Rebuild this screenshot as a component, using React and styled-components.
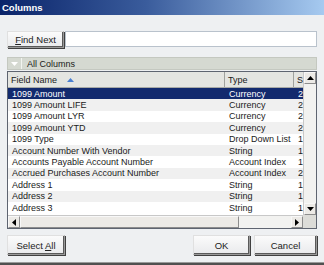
import React from 'react'
import styled, { createGlobalStyle } from 'styled-components';

const Global = createGlobalStyle`
html,body{margin:0;padding:0;overflow:hidden;background:#eef0f2;}
*{box-sizing:border-box;}
`;

const rows = [
  ['1099 Amount', 'Currency', '2'],
  ['1099 Amount LIFE', 'Currency', '2'],
  ['1099 Amount LYR', 'Currency', '2'],
  ['1099 Amount YTD', 'Currency', '2'],
  ['1099 Type', 'Drop Down List', '1'],
  ['Account Number With Vendor', 'String', '1'],
  ['Accounts Payable Account Number', 'Account Index', '1'],
  ['Accrued Purchases Account Number', 'Account Index', '2'],
  ['Address 1', 'String', '1'],
  ['Address 2', 'String', '1'],
  ['Address 3', 'String', '1'],
];

function App() {
  return (
    <Window>
      <Global />
      <TitleBar>Columns</TitleBar>
      <Content>
        <FindRow>
          <Button width="57px"><span><u>F</u>ind Next</span></Button>
          <FindInput type="text" />
        </FindRow>
        <FilterBar>
          <DropArrow>
            <svg width="7" height="4" viewBox="0 0 7 4"><polygon points="0,0 7,0 3.5,4" fill="#fff" /></svg>
          </DropArrow>
          <span>All Columns</span>
        </FilterBar>
        <GridBox>
          <Table>
            <HeaderRow>
              <HeadCell width="217px">
                Field Name
                <SortArrow width="7" height="4" viewBox="0 0 7 4"><polygon points="3.5,0 7,4 0,4" fill="#4a7fd0" /></SortArrow>
              </HeadCell>
              <HeadCell width="69px">Type</HeadCell>
              <HeadCell width="20px">S</HeadCell>
            </HeaderRow>
            {rows.map((r, i) => (
              <Row key={r[0]} selected={i === 0} odd={i % 2 === 1}>
                <Cell width="217px">{r[0]}</Cell>
                <Cell width="69px">{r[1]}</Cell>
                <Cell width="20px">{r[2]}</Cell>
              </Row>
            ))}
          </Table>
          <VScroll>
            <ArrowBtn>
              <svg width="7" height="4" viewBox="0 0 7 4"><polygon points="3.5,0 7,4 0,4" fill="#000" /></svg>
            </ArrowBtn>
            <VTrack />
            <ArrowBtn>
              <svg width="7" height="4" viewBox="0 0 7 4"><polygon points="0,0 7,0 3.5,4" fill="#000" /></svg>
            </ArrowBtn>
          </VScroll>
          <HScroll>
            <ArrowBtn>
              <svg width="4" height="7" viewBox="0 0 4 7"><polygon points="0,3.5 4,0 4,7" fill="#000" /></svg>
            </ArrowBtn>
            <HThumb />
            <HTrack />
            <ArrowBtn>
              <svg width="4" height="7" viewBox="0 0 4 7"><polygon points="4,3.5 0,0 0,7" fill="#000" /></svg>
            </ArrowBtn>
          </HScroll>
          <Corner />
        </GridBox>
        <ButtonRow>
          <Button width="58px"><span>Select <u>A</u>ll</span></Button>
          <Spacer />
          <Button width="57px">OK</Button>
          <Button width="63px">Cancel</Button>
        </ButtonRow>
      </Content>
      <BottomEdge />
    </Window>
  );
}

const Window = styled.div`
width:324px;
height:265px;
background:#eef0f2;
display:flex;
flex-direction:column;
font-family:"Liberation Sans", Arial, sans-serif;
font-size:9px;
color:#1a1a1a;
overflow:hidden;
`;

const TitleBar = styled.div`
height:15px;
flex:none;
background:linear-gradient(to right,#0a246a 0%,#3a5c9c 45%,#a6caf0 100%);
color:#fff;
font-weight:bold;
font-size:9.5px;
display:flex;
align-items:center;
padding-left:2px;
`;

const Content = styled.div`
flex:1;
display:flex;
flex-direction:column;
padding:16px 7px 0 7px;
`;

const FindRow = styled.div`
display:flex;
height:17px;
gap:1px;
`;

const Button = styled.div`
width:${p => p.width};
height:100%;
flex:none;
display:flex;
align-items:center;
justify-content:center;
background:linear-gradient(#fbfbfb,#e9eaec);
border:1px solid #9a9a9a;
border-top-color:#e0e0e0;
border-left-color:#e0e0e0;
box-shadow:inset -1px -1px 0 #5a5a5a, 1px 1px 0 #404040;
color:#222;
font-size:9.5px;
`;

const FindInput = styled.input`
flex:1;
height:16px;
border:1px solid #b9c2cc;
background:#fff;
outline:none;
`;

const FilterBar = styled.div`
margin-top:9px;
height:13px;
background:#d5d9d1;
border:1px solid #c4c8c0;
display:flex;
align-items:center;
span{padding-left:5px;}
`;

const DropArrow = styled.div`
width:14px;
height:100%;
display:flex;
align-items:center;
justify-content:center;
border-right:1px solid #f2f4f0;
`;

const GridBox = styled.div`
margin-top:1px;
height:158px;
border:1px solid #5e6470;
display:grid;
grid-template-columns:1fr 13px;
grid-template-rows:1fr 13px;
background:#fff;
`;

const Table = styled.div`
overflow:hidden;
`;

const HeaderRow = styled.div`
display:flex;
height:16px;
background:#e4e5e1;
border-bottom:1px solid #a8aaa6;
`;

const HeadCell = styled.div`
width:${p => p.width};
flex:none;
display:flex;
align-items:center;
padding-left:3px;
border-right:1px solid #a0a29e;
white-space:nowrap;
overflow:hidden;
`;

const SortArrow = styled.svg`
margin-left:10px;
`;

const Row = styled.div`
display:flex;
height:11.4px;
align-items:center;
background:${p => p.selected ? '#122a6e' : p.odd ? '#f0f0f0' : '#fff'};
color:${p => p.selected ? '#fff' : '#1a1a1a'};
`;

const Cell = styled.div`
width:${p => p.width};
flex:none;
padding-left:4px;
white-space:nowrap;
overflow:hidden;
`;

const VScroll = styled.div`
display:flex;
flex-direction:column;
background:#f2f2f0;
border-left:1px solid #c8c8c8;
`;

const ArrowBtn = styled.div`
width:12px;
height:12px;
flex:none;
display:flex;
align-items:center;
justify-content:center;
background:#eceae6;
border:1px solid #f8f8f8;
border-right-color:#8c8c8c;
border-bottom-color:#8c8c8c;
`;

const VTrack = styled.div`
flex:1;
`;

const HScroll = styled.div`
display:flex;
background:#f2f2f0;
border-top:1px solid #c8c8c8;
`;

const HThumb = styled.div`
width:219px;
background:#eceae6;
border:1px solid #f8f8f8;
border-right-color:#8c8c8c;
border-bottom-color:#8c8c8c;
`;

const HTrack = styled.div`
flex:1;
`;

const Corner = styled.div`
background:#dcdcd8;
`;

const ButtonRow = styled.div`
margin-top:6px;
height:20px;
display:flex;
gap:4px;
`;

const Spacer = styled.div`
flex:1;
`;

const BottomEdge = styled.div`
height:3px;
flex:none;
background:#505050;
border-top:1px solid #9a9a9a;
`;

export default App;
